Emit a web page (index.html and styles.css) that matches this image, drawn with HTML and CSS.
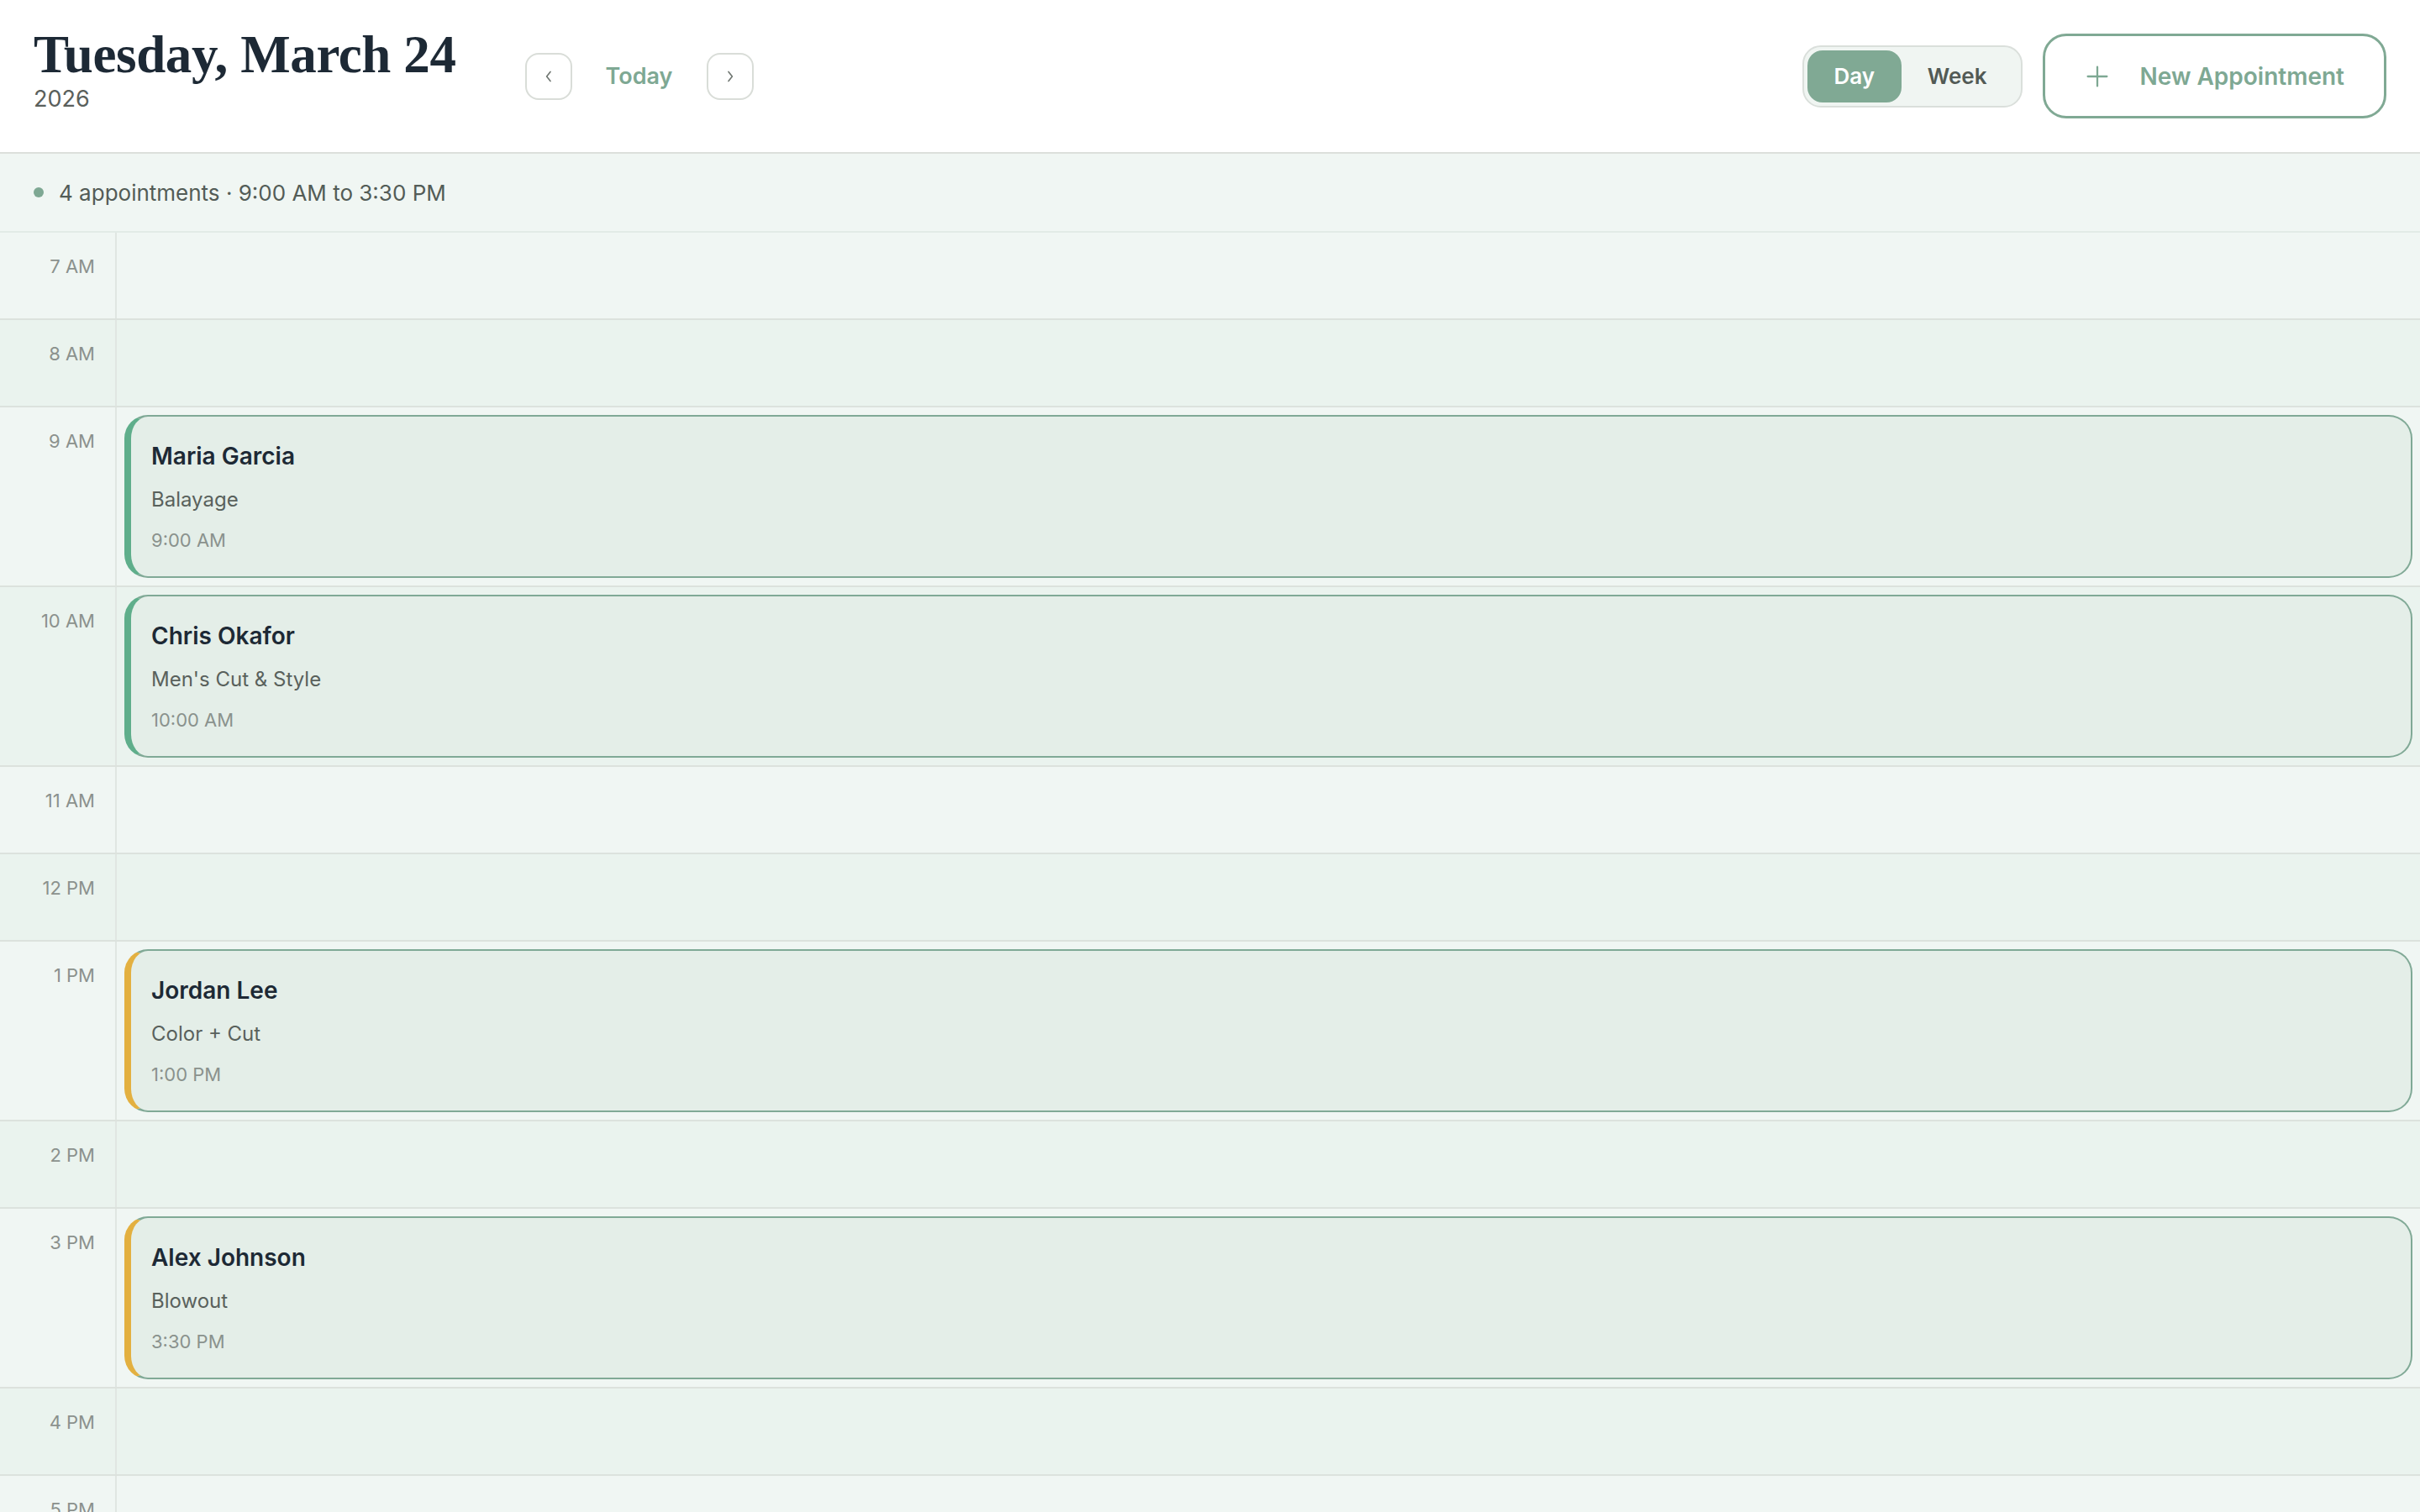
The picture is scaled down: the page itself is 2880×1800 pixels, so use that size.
FILE: index.html
```html
<!DOCTYPE html>
<html>
<head>
    <title>Schedule</title>
    <meta name="viewport" content="width=device-width, initial-scale=1">
    <link rel="stylesheet" href="styles.css">
</head>
<body>
    <header class="topbar">
        <div class="date-block">
            <h1>Tuesday, March 24</h1>
            <div class="year">2026</div>
        </div>
        <nav class="day-nav">
            <button class="icon-btn" aria-label="Previous day">
                <svg width="20" height="20" viewBox="0 0 10 10"><path d="M6 2.2 L3.8 5 L6 7.8" fill="none" stroke="#6f7671" stroke-width="0.8" stroke-linecap="round" stroke-linejoin="round"/></svg>
            </button>
            <button class="today-btn">Today</button>
            <button class="icon-btn" aria-label="Next day">
                <svg width="20" height="20" viewBox="0 0 10 10"><path d="M4 2.2 L6.2 5 L4 7.8" fill="none" stroke="#6f7671" stroke-width="0.8" stroke-linecap="round" stroke-linejoin="round"/></svg>
            </button>
        </nav>
        <div class="actions">
            <div class="view-toggle">
                <button class="view-btn active">Day</button>
                <button class="view-btn">Week</button>
            </div>
            <button class="new-btn">
                <svg width="28" height="28" viewBox="0 0 16 16"><path d="M8 1.5 V14.5 M1.5 8 H14.5" stroke="#7ea893" stroke-width="1.3" stroke-linecap="round"/></svg>
                <span>New Appointment</span>
            </button>
        </div>
    </header>

    <div class="summary">
        <span class="dot"></span>
        <span>4 appointments · 9:00 AM to 3:30 PM</span>
    </div>

    <div class="schedule">
        <div class="hour-row">
            <div class="hour-label">7 AM</div>
            <div class="hour-slot"></div>
        </div>
        <div class="hour-row">
            <div class="hour-label">8 AM</div>
            <div class="hour-slot"></div>
        </div>
        <div class="hour-row">
            <div class="hour-label">9 AM</div>
            <div class="hour-slot">
                <div class="appt green">
                    <div class="appt-name">Maria Garcia</div>
                    <div class="appt-service">Balayage</div>
                    <div class="appt-time">9:00 AM</div>
                </div>
            </div>
        </div>
        <div class="hour-row">
            <div class="hour-label">10 AM</div>
            <div class="hour-slot">
                <div class="appt green">
                    <div class="appt-name">Chris Okafor</div>
                    <div class="appt-service">Men's Cut &amp; Style</div>
                    <div class="appt-time">10:00 AM</div>
                </div>
            </div>
        </div>
        <div class="hour-row">
            <div class="hour-label">11 AM</div>
            <div class="hour-slot"></div>
        </div>
        <div class="hour-row">
            <div class="hour-label">12 PM</div>
            <div class="hour-slot"></div>
        </div>
        <div class="hour-row">
            <div class="hour-label">1 PM</div>
            <div class="hour-slot">
                <div class="appt gold">
                    <div class="appt-name">Jordan Lee</div>
                    <div class="appt-service">Color + Cut</div>
                    <div class="appt-time">1:00 PM</div>
                </div>
            </div>
        </div>
        <div class="hour-row">
            <div class="hour-label">2 PM</div>
            <div class="hour-slot"></div>
        </div>
        <div class="hour-row">
            <div class="hour-label">3 PM</div>
            <div class="hour-slot">
                <div class="appt gold">
                    <div class="appt-name">Alex Johnson</div>
                    <div class="appt-service">Blowout</div>
                    <div class="appt-time">3:30 PM</div>
                </div>
            </div>
        </div>
        <div class="hour-row">
            <div class="hour-label">4 PM</div>
            <div class="hour-slot"></div>
        </div>
        <div class="hour-row">
            <div class="hour-label">5 PM</div>
            <div class="hour-slot"></div>
        </div>
    </div>
</body>
</html>
```

FILE: styles.css
```css
html, body {
    margin: 0;
    height: 100%;
}

body {
    background-color: #f0f6f3;
    font-family: Inter, 'Noto Sans', sans-serif;
    color: #2a332e;
    overflow: hidden;
}

button {
    font-family: inherit;
    cursor: pointer;
}

.topbar {
    display: flex;
    align-items: center;
    height: 181px;
    padding: 0 40px;
    background-color: #fff;
    border-bottom: 2px solid #dcdfdb;
}

.date-block {
    margin-bottom: 18px;
}

.date-block h1 {
    font-family: 'Liberation Serif', 'DejaVu Serif', serif;
    font-size: 63px;
    font-weight: bold;
    line-height: 70px;
    margin: 0;
    color: #1d2935;
    letter-spacing: -0.4px;
}

.year {
    font-size: 27px;
    color: #5a605c;
    margin-top: 1px;
}

.day-nav {
    display: flex;
    align-items: center;
    gap: 40px;
    margin-left: 82px;
}

.icon-btn {
    width: 56px;
    height: 56px;
    border: 2px solid #d9ddd8;
    border-radius: 16px;
    background-color: #fff;
    display: flex;
    align-items: center;
    justify-content: center;
    padding: 0;
}

.today-btn {
    border: none;
    background: none;
    padding: 0;
    font-size: 27px;
    font-weight: 600;
    color: #7ea893;
}

.actions {
    margin-left: auto;
    display: flex;
    align-items: center;
    gap: 24px;
}

.view-toggle {
    display: flex;
    align-items: center;
    background-color: #f0f5f2;
    border: 2px solid #dadfdb;
    border-radius: 22px;
    padding: 4px;
}

.view-btn {
    border: none;
    background: none;
    height: 62px;
    padding: 0 36px 0 31px;
    border-radius: 18px;
    font-size: 26px;
    font-weight: 600;
    color: #525a55;
}

.view-btn.active {
    background-color: #80a994;
    color: #fff;
    width: 112px;
    padding: 0;
}

.new-btn {
    display: flex;
    align-items: center;
    gap: 37px;
    height: 101px;
    padding: 0 47px 0 48px;
    background-color: #fff;
    border: 3px solid #80a994;
    border-radius: 28px;
    font-size: 28px;
    font-weight: 600;
    color: #7ea893;
}

.summary {
    display: flex;
    align-items: center;
    gap: 18px;
    height: 92px;
    padding: 0 40px;
    font-size: 26px;
    color: #535c57;
    background-color: #f0f6f3;
    border-bottom: 2px solid #e2ebe6;
}

.dot {
    width: 12px;
    height: 12px;
    border-radius: 50%;
    background-color: #7ea893;
}

.hour-row {
    display: flex;
    min-height: 102px;
    border-bottom: 2px solid #dce2dd;
    background-color: #f0f6f3;
}

.hour-row:nth-child(even) {
    background-color: #eaf3ee;
}

.hour-label {
    width: 113px;
    flex-shrink: 0;
    padding: 26px 24px 0 0;
    text-align: right;
    font-size: 22px;
    line-height: 28px;
    color: #8b918d;
    border-right: 2px solid #e0e6e2;
}

.hour-slot {
    flex-grow: 1;
    padding: 9px;
}

.appt {
    background-color: #e4eee8;
    border: 2px solid #80a996;
    border-left: 8px solid #5fae8b;
    border-radius: 28px;
    padding: 27px 32px 27px 24px;
}

.appt.gold {
    border-left-color: #e3b040;
}

.appt-name {
    font-size: 28px;
    font-weight: 600;
    line-height: 40px;
    color: #1d2935;
}

.appt-service {
    font-size: 24px;
    line-height: 36px;
    margin-top: 14px;
    color: #59615c;
}

.appt-time {
    font-size: 22px;
    line-height: 32px;
    margin-top: 14px;
    color: #8a928d;
}
```
